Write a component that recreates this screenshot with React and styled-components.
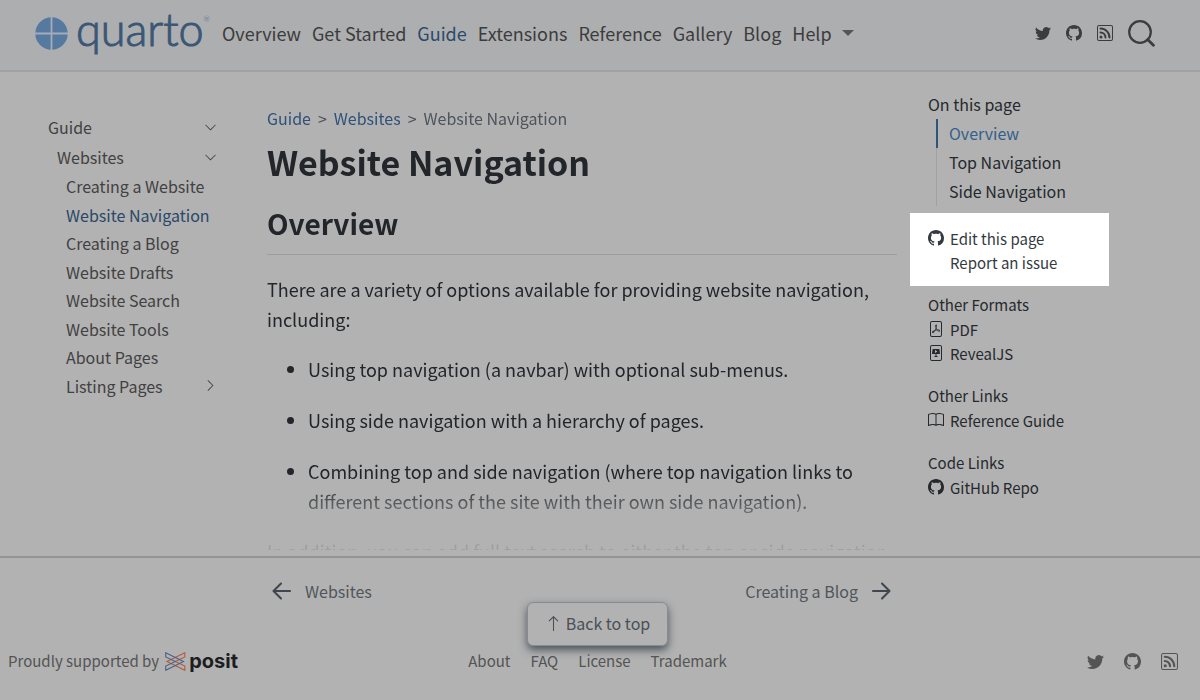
import React from "react";
import styled, { createGlobalStyle } from "styled-components";
import {
  BsTwitter,
  BsGithub,
  BsFilePdf,
  BsFileSlides,
  BsBook,
  BsChevronDown,
  BsChevronRight,
  BsArrowUp,
} from "react-icons/bs";

const GlobalStyle = createGlobalStyle`
  * { box-sizing: border-box; }
  body {
    margin: 0;
    background: #b2b2b2;
    color: #22262a;
    font-family: "Noto Sans CJK SC", "Open Sans", sans-serif;
    font-size: 15px;
    line-height: 24px;
  }
  a { color: inherit; text-decoration: none; }
  ul { list-style: none; margin: 0; padding: 0; }
  svg { display: block; flex: none; }
  button { font: inherit; color: inherit; background: none; border: 0; padding: 0; cursor: pointer; }
`;

const Page = styled.div`
  height: 100vh;
  display: grid;
  grid-template-rows: auto minmax(0, 1fr) auto;
`;

const Header = styled.header`
  display: flex;
  align-items: center;
  height: 72px;
  padding: 0 45px 4px 35px;
  background: #adaeb0;
  border-bottom: 2px solid #a1a2a4;
  color: #3c3c3c;
`;

const Brand = styled.a`
  display: flex;
  align-items: center;
  gap: 8px;
  width: 170px;
  margin-right: 17px;
  color: #3b5775;
`;

const Wordmark = styled.span`
  display: flex;
  padding-bottom: 8px;
  font-family: Lato, sans-serif;
  font-weight: 300;
  font-size: 45px;
  line-height: 48px;
  -webkit-text-stroke: 1px currentColor;
`;

const Registered = styled.sup`
  font-size: 7px;
  line-height: 28px;
  -webkit-text-stroke: 0;
`;

const NavLinks = styled.nav`
  display: flex;
  align-items: center;
  gap: 11px;
  flex: 1;
  font-size: 18px;
  line-height: 28px;
  white-space: nowrap;
`;

const NavLink = styled.a`
  color: ${(p) => (p.$active ? "#2a4a6b" : "inherit")};
`;

const NavMenu = styled.button`
  display: flex;
  align-items: center;
  gap: 10px;
`;

const Caret = styled.span`
  border: 6px solid transparent;
  border-top-color: #555;
  border-bottom: 0;
`;

const Tools = styled.div`
  display: flex;
  align-items: center;
  gap: ${(p) => p.$gap}px;
`;

const Columns = styled.div`
  display: grid;
  grid-template-columns: 217px minmax(0, 1fr) 290px;
  padding-bottom: 6px;
  min-height: 0;
`;

const Sidebar = styled.nav`
  padding: 40px 0 0 48px;
  font-size: 16px;
  color: #414141;
`;

const SideRow = styled.div`
  display: flex;
  align-items: center;
  justify-content: space-between;
  height: 30px;
  padding-left: ${(p) => p.$level * 9}px;
`;

const SideList = styled.ul`
  display: flex;
  flex-direction: column;
  height: 228px;
`;

const SideItem = styled.li`
  flex: 1;
  display: flex;
  align-items: center;
  justify-content: space-between;
  padding-left: 18px;
  color: ${(p) => (p.$active ? "#284866" : "inherit")};
`;

const Article = styled.main`
  padding: 34px 0 0 50px;
  margin-right: 13px;
  overflow: hidden;
  font-size: 18px;
  line-height: 30px;
  mask-image: linear-gradient(#000 405px, rgba(0, 0, 0, 0.2) 460px, rgba(0, 0, 0, 0.12));
`;

const Breadcrumb = styled.nav`
  display: flex;
  gap: 7px;
  font-size: 16px;
  line-height: 24px;
  color: #4d545b;
  a { color: #2d5178; }
`;

const Title = styled.h1`
  margin: 8px 0 0;
  font-size: 34px;
  line-height: 48px;
  font-weight: 700;
`;

const Heading = styled.h2`
  margin: 16px 0 19px;
  padding-bottom: 10px;
  border-bottom: 1px solid #9c9d9e;
  font-size: 28px;
  line-height: 42px;
  font-weight: 700;
`;

const Paragraph = styled.p`
  margin: 0 0 20px;
`;

const Bullets = styled.ul`
  list-style: disc;
  padding-left: 41px;
`;

const Bullet = styled.li`
  margin-bottom: 21px;
  &:last-child { margin-bottom: 20px; }
`;

const Aside = styled.aside`
  color: #25292d;
`;

const Toc = styled.nav`
  padding: 19px 0 7px 18px;
  font-size: 16px;
`;

const TocTitle = styled.h2`
  margin: 0;
  padding-bottom: 2px;
  font-size: 16px;
  line-height: 26px;
  font-weight: 400;
`;

const TocList = styled.ul`
  padding-left: 8px;
`;

const TocItem = styled.li`
  line-height: 29px;
  border-left: ${(p) => (p.$active ? "2px solid #2f547c" : "1px solid #a0a1a2")};
  padding-left: ${(p) => (p.$active ? 11 : 12)}px;
  color: ${(p) => (p.$active ? "#345f8c" : "inherit")};
`;

const Spotlight = styled.section`
  width: 199px;
  padding: 14px 18px 11px;
  background: #fff;
  color: #343a40;
`;

const LinkGroups = styled.div`
  display: grid;
  gap: 17px;
  padding: 6px 0 0 18px;
`;

const GroupTitle = styled.h3`
  margin: 0;
  font-size: 15px;
  line-height: 26px;
  font-weight: 400;
`;

const IconLink = styled.a`
  display: flex;
  align-items: center;
  gap: 6px;
  padding-left: ${(p) => (p.$indent ? 22 : 0)}px;
  svg { margin-top: -2px; }
`;

const Footer = styled.footer`
  position: relative;
  padding-right: 5px;
  border-top: 2px solid #949494;
  color: #545454;
`;

const Pager = styled.nav`
  display: flex;
  justify-content: space-between;
  padding: 19px 304px 0 272px;
  font-size: 16px;
  line-height: 28px;
  color: #50565c;
`;

const PagerLink = styled.a`
  display: flex;
  align-items: center;
  gap: 13px;
  svg { color: #3f464d; }
`;

const BackToTop = styled.button`
  position: absolute;
  top: 44px;
  left: 0;
  right: 5px;
  width: max-content;
  margin: 0 auto;
  display: flex;
  align-items: center;
  gap: 4px;
  height: 44px;
  padding: 0 17px 2px;
  background: #b2b2b2;
  border: 1px solid #868c93;
  border-radius: 6px;
  box-shadow: 0 4px 8px #4c535b;
  font-size: 16px;
  color: #4a5056;
`;

const FooterBar = styled.div`
  display: grid;
  grid-template-columns: 1fr auto 1fr;
  align-items: center;
  padding: 44px 0 27px;
`;

const Support = styled.a`
  display: flex;
  align-items: center;
  gap: 6px;
  padding-left: 8px;
`;

const Posit = styled.span`
  display: flex;
  align-items: center;
  gap: 3px;
  font-family: Inter, sans-serif;
  font-weight: 700;
  font-size: 20px;
  color: #1d1d1f;
`;

const FooterLinks = styled.nav`
  display: flex;
  gap: 20px;
`;

const FooterTools = styled(Tools)`
  justify-content: flex-end;
  padding-right: 17px;
`;

const QuartoMark = () => (
  <svg width="33" height="33" viewBox="0 0 33 33" aria-hidden="true">
    <circle cx="16.5" cy="16.5" r="16.2" fill="#5679a0" />
    <path d="M16.5 0v33M0 16.5h33" stroke="#a3acb7" strokeWidth="1.8" />
  </svg>
);

const PositMark = () => (
  <svg width="21" height="19" viewBox="0 0 21 19" fill="none" strokeWidth="1.1" aria-hidden="true">
    <path d="M19.8 .7 L2 9.5 L19.8 18.3 V14 L10.3 9.5 L19.8 5Z" transform="translate(0 0)" stroke="#b25b3e" />
    <path d="M.7 .7 L18.5 9.5 L.7 18.3 V14 L10.3 9.5 L.7 5Z" stroke="#4a6280" />
  </svg>
);

const SearchIcon = () => (
  <svg width="27" height="27" viewBox="0 0 27 27" fill="none" stroke="currentColor" aria-hidden="true">
    <circle cx="12" cy="12" r="10.8" strokeWidth="2.2" />
    <path d="M19.6 19.6 L25.4 25.2" strokeWidth="2.8" strokeLinecap="round" />
  </svg>
);

const Arrow = ({ d }) => (
  <svg
    width="20"
    height="18"
    viewBox="0 0 20 18"
    fill="none"
    stroke="currentColor"
    strokeWidth="2.1"
    strokeLinecap="round"
    strokeLinejoin="round"
    aria-hidden="true"
  >
    <path d={d} />
  </svg>
);

const RssSquare = ({ size }) => (
  <svg width={size} height={size} viewBox="0 0 16 16" fill="currentColor" aria-hidden="true">
    <path d="M14 1a1 1 0 0 1 1 1v12a1 1 0 0 1-1 1H2a1 1 0 0 1-1-1V2a1 1 0 0 1 1-1zM2 0a2 2 0 0 0-2 2v12a2 2 0 0 0 2 2h12a2 2 0 0 0 2-2V2a2 2 0 0 0-2-2z" />
    <path d="M5.5 12a1.5 1.5 0 1 1-3 0 1.5 1.5 0 0 1 3 0m-3-8.5a1 1 0 0 1 1-1c5.523 0 10 4.477 10 10a1 1 0 1 1-2 0 8 8 0 0 0-8-8 1 1 0 0 1-1-1m0 4a1 1 0 0 1 1-1 6 6 0 0 1 6 6 1 1 0 1 1-2 0 4 4 0 0 0-4-4 1 1 0 0 1-1-1" />
  </svg>
);

const topLinks = ["Overview", "Get Started", "Guide", "Extensions", "Reference", "Gallery", "Blog"];
const sideLinks = [
  "Creating a Website",
  "Website Navigation",
  "Creating a Blog",
  "Website Drafts",
  "Website Search",
  "Website Tools",
  "About Pages",
  "Listing Pages",
];
const groups = [
  { title: "Other Formats", links: [["PDF", BsFilePdf], ["RevealJS", BsFileSlides]] },
  { title: "Other Links", links: [["Reference Guide", BsBook]] },
  { title: "Code Links", links: [["GitHub Repo", BsGithub]] },
];

const SocialLinks = ({ size }) => (
  <>
    <a href="#twitter" aria-label="Twitter"><BsTwitter size={size} /></a>
    <a href="#github" aria-label="GitHub"><BsGithub size={size} /></a>
    <a href="#rss" aria-label="RSS feed"><RssSquare size={size} /></a>
  </>
);

export default function App() {
  return (
    <Page>
      <GlobalStyle />
      <Header>
        <Brand href="#home">
          <QuartoMark />
          <Wordmark>
            quarto<Registered>®</Registered>
          </Wordmark>
        </Brand>
        <NavLinks>
          {topLinks.map((t) => (
            <NavLink key={t} href="#nav" $active={t === "Guide"}>{t}</NavLink>
          ))}
          <NavMenu type="button">Help<Caret /></NavMenu>
        </NavLinks>
        <Tools $gap={15}>
          <SocialLinks size={16} />
          <button type="button" aria-label="Search"><SearchIcon /></button>
        </Tools>
      </Header>

      <Columns>
        <Sidebar>
          <SideRow $level={0}><a href="#guide">Guide</a><BsChevronDown size={13} /></SideRow>
          <SideRow $level={1}><a href="#websites">Websites</a><BsChevronDown size={13} /></SideRow>
          <SideList>
            {sideLinks.map((t) => (
              <SideItem key={t} $active={t === "Website Navigation"}>
                <a href="#page">{t}</a>
                {t === "Listing Pages" && <BsChevronRight size={13} />}
              </SideItem>
            ))}
          </SideList>
        </Sidebar>

        <Article>
          <Breadcrumb>
            <a href="#guide">Guide</a>
            <span>&gt;</span>
            <a href="#websites">Websites</a>
            <span>&gt;</span>
            <span>Website Navigation</span>
          </Breadcrumb>
          <Title>Website Navigation</Title>
          <Heading>Overview</Heading>
          <Paragraph>There are a variety of options available for providing website navigation, including:</Paragraph>
          <Bullets>
            <Bullet>Using top navigation (a navbar) with optional sub-menus.</Bullet>
            <Bullet>Using side navigation with a hierarchy of pages.</Bullet>
            <Bullet>
              Combining top and side navigation (where top navigation links to different sections of the site with their
              own side navigation).
            </Bullet>
          </Bullets>
          <Paragraph>In addition, you can add full text search to either the top or side navigation</Paragraph>
        </Article>

        <Aside>
          <Toc>
            <TocTitle>On this page</TocTitle>
            <TocList>
              {["Overview", "Top Navigation", "Side Navigation"].map((t) => (
                <TocItem key={t} $active={t === "Overview"}><a href="#section">{t}</a></TocItem>
              ))}
            </TocList>
          </Toc>
          <Spotlight>
            <IconLink href="#edit"><BsGithub size={16} />Edit this page</IconLink>
            <IconLink href="#issue" $indent>Report an issue</IconLink>
          </Spotlight>
          <LinkGroups>
            {groups.map((g) => (
              <section key={g.title}>
                <GroupTitle>{g.title}</GroupTitle>
                {g.links.map(([label, Icon]) => (
                  <IconLink key={label} href="#link"><Icon size={16} />{label}</IconLink>
                ))}
              </section>
            ))}
          </LinkGroups>
        </Aside>
      </Columns>

      <Footer>
        <Pager>
          <PagerLink href="#prev"><Arrow d="M18 9H2M9 1.5L1.5 9L9 16.5" />Websites</PagerLink>
          <PagerLink href="#next">Creating a Blog<Arrow d="M2 9H18M11 1.5L18.5 9L11 16.5" /></PagerLink>
        </Pager>
        <BackToTop type="button"><BsArrowUp size={17} />Back to top</BackToTop>
        <FooterBar>
          <Support href="#posit">
            Proudly supported by
            <Posit><PositMark />posit</Posit>
          </Support>
          <FooterLinks>
            {["About", "FAQ", "License", "Trademark"].map((t) => (
              <a key={t} href="#footer">{t}</a>
            ))}
          </FooterLinks>
          <FooterTools $gap={20}>
            <SocialLinks size={17} />
          </FooterTools>
        </FooterBar>
      </Footer>
    </Page>
  );
}
